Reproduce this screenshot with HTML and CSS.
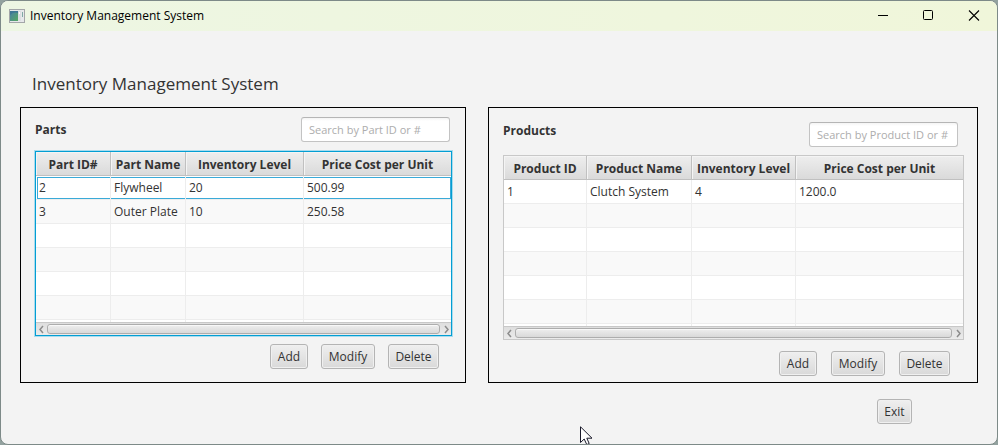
FILE: index.html
```html
<!DOCTYPE html>
<html lang="en">
<head>
<meta charset="utf-8">
<title>Inventory Management System</title>
<link rel="stylesheet" href="styles.css">
</head>
<body>
<div class="window">
  <header class="titlebar">
    <svg class="app-icon" width="16" height="14" viewBox="0 0 16 14" aria-hidden="true">
      <defs><linearGradient id="pane" x1="0" y1="0" x2="1" y2="1"><stop offset="0" stop-color="#4a7fa8"/><stop offset="1" stop-color="#55a860"/></linearGradient></defs>
      <rect x=".5" y=".5" width="15" height="13" fill="#e6e8ea" stroke="#a3a6a8"/>
      <rect x="1" y="2" width="8" height="10" fill="url(#pane)"/>
      <path d="M1 6C4 3 7 3 9 4V2H1Z" fill="#3f7795"/>
      <rect x="9" y="2" width="3" height="10" fill="#dcdfe2"/>
      <rect x="10" y="3" width="1" height="2" fill="#fff"/>
      <rect x="13" y="3" width="1" height="5" fill="#7fa9a4"/>
    </svg>
    <span class="caption">Inventory Management System</span>
    <button class="win-btn" type="button" aria-label="Minimize"><svg width="12" height="12" viewBox="0 0 12 12"><path d="M2 5.5H12" stroke="#000" fill="none"/></svg></button>
    <button class="win-btn" type="button" aria-label="Maximize"><svg width="12" height="12" viewBox="0 0 12 12"><rect x="1.5" y=".5" width="9" height="9" rx="1" stroke="#000" fill="none"/></svg></button>
    <button class="win-btn" type="button" aria-label="Close"><svg width="12" height="12" viewBox="0 0 12 12"><path d="M1 .5L11 10.5M11 .5L1 10.5" stroke="#000" stroke-width="1.1" fill="none"/></svg></button>
  </header>

  <main class="content">
    <h1>Inventory Management System</h1>
    <div class="panels">
      <section class="panel">
        <div class="panel-head">
          <label for="part-search">Parts</label>
          <input id="part-search" type="text" placeholder="Search by Part ID or #">
        </div>
        <div class="table-view focused">
          <table>
            <colgroup><col class="w75"><col class="w75"><col class="w118"><col></colgroup>
            <thead><tr><th>Part ID#</th><th>Part Name</th><th>Inventory Level</th><th>Price Cost per Unit</th></tr></thead>
            <tbody>
              <tr class="current"><td>2</td><td>Flywheel</td><td>20</td><td>500.99</td></tr>
              <tr><td>3</td><td>Outer Plate</td><td>10</td><td>250.58</td></tr>
              <tr><td></td><td></td><td></td><td></td></tr>
              <tr><td></td><td></td><td></td><td></td></tr>
              <tr><td></td><td></td><td></td><td></td></tr>
              <tr><td></td><td></td><td></td><td></td></tr>
              <tr class="partial"><td></td><td></td><td></td><td></td></tr>
            </tbody>
          </table>
          <div class="scrollbar">
            <button type="button" aria-label="Scroll left"><svg width="6" height="9" viewBox="0 0 6 9"><path d="M4 1L1 4.5L4 8" fill="none" stroke="#8c8c8c" stroke-width="1.5"/></svg></button>
            <div class="thumb"></div>
            <button type="button" aria-label="Scroll right"><svg width="6" height="9" viewBox="0 0 6 9"><path d="M2 1L5 4.5L2 8" fill="none" stroke="#8c8c8c" stroke-width="1.5"/></svg></button>
          </div>
        </div>
        <div class="actions">
          <button class="btn add" type="button">Add</button>
          <button class="btn modify" type="button">Modify</button>
          <button class="btn delete" type="button">Delete</button>
        </div>
      </section>

      <section class="panel products">
        <div class="panel-head">
          <label for="product-search">Products</label>
          <input id="product-search" type="text" placeholder="Search by Product ID or #">
        </div>
        <div class="table-view">
          <table>
            <colgroup><col class="w83"><col class="w105"><col class="w104"><col></colgroup>
            <thead><tr><th>Product ID</th><th>Product Name</th><th>Inventory Level</th><th>Price Cost per Unit</th></tr></thead>
            <tbody>
              <tr><td>1</td><td>Clutch System</td><td>4</td><td>1200.0</td></tr>
              <tr><td></td><td></td><td></td><td></td></tr>
              <tr><td></td><td></td><td></td><td></td></tr>
              <tr><td></td><td></td><td></td><td></td></tr>
              <tr><td></td><td></td><td></td><td></td></tr>
              <tr><td></td><td></td><td></td><td></td></tr>
              <tr class="partial"><td></td><td></td><td></td><td></td></tr>
            </tbody>
          </table>
          <div class="scrollbar">
            <button type="button" aria-label="Scroll left"><svg width="6" height="9" viewBox="0 0 6 9"><path d="M4 1L1 4.5L4 8" fill="none" stroke="#8c8c8c" stroke-width="1.5"/></svg></button>
            <div class="thumb"></div>
            <button type="button" aria-label="Scroll right"><svg width="6" height="9" viewBox="0 0 6 9"><path d="M2 1L5 4.5L2 8" fill="none" stroke="#8c8c8c" stroke-width="1.5"/></svg></button>
          </div>
        </div>
        <div class="actions">
          <button class="btn add" type="button">Add</button>
          <button class="btn modify" type="button">Modify</button>
          <button class="btn delete" type="button">Delete</button>
        </div>
      </section>
    </div>
    <div class="footer"><button class="btn exit" type="button">Exit</button></div>
  </main>
  <svg class="cursor" width="13" height="19" viewBox="0 0 13 19" aria-hidden="true"><path d="M.5 .8V16.5L4.2 13L6.8 18.6L9.2 17.5L6.8 12.2H12Z" fill="#fff" stroke="#1a1a2a"/></svg>
</div>
</body>
</html>
```
FILE: styles.css
```css
* { box-sizing: border-box; }

body {
  margin: 0;
  background: #93a29f;
  color: #333;
  font: 12px/16px "Open Sans", "Noto Sans", sans-serif;
}

button, input { font: inherit; color: inherit; }

.window {
  position: relative;
  min-height: 100vh;
  border: 1px solid #7d8a88;
  border-radius: 8px;
  background: #f3f3f3;
  overflow: hidden;
}

.titlebar {
  display: flex;
  align-items: center;
  height: 30px;
  padding-left: 8px;
  background: linear-gradient(90deg, #edf6e3, #f0f6da);
  color: #000;
}

.app-icon { margin-right: 5px; }
.caption { flex: 1; }

.win-btn {
  display: flex;
  align-items: center;
  justify-content: center;
  width: 46px;
  height: 30px;
  padding: 0;
  border: 0;
  background: none;
}

.content { padding: 40px 19px 20px; }

h1 {
  margin: 0 0 10px;
  padding-left: 12px;
  font-size: 17px;
  font-weight: 400;
  line-height: 26px;
}

.panels {
  display: grid;
  grid-template-columns: 446fr 490fr;
  gap: 22px;
}

.panel {
  height: 276px;
  padding: 9px 13px 0 14px;
  border: 1px solid #000;
}

.products { padding-top: 14px; }

.panel-head {
  display: flex;
  justify-content: space-between;
  height: 34px;
  padding-right: 2px;
}

.products .panel-head { height: 33px; padding-right: 6px; }

.panel-head label { padding-top: 5px; font-weight: 700; }
.products label { padding-top: 1px; }

.panel-head input {
  width: 149px;
  height: 25px;
  padding: 0 7px;
  border: 1px solid #c3c3c3;
  border-top-color: #b5b5b5;
  border-radius: 3px;
  background: linear-gradient(#f4f4f4, #fff 3px);
  font-size: 11px;
  outline: none;
}

.panel-head input::placeholder { color: #adadad; opacity: 1; }

.table-view { border: 1px solid #c8c8c8; background: #fff; }
.focused { border-color: #039ed3; box-shadow: 0 0 0 1px #a9dcee; }

table {
  width: 100%;
  table-layout: fixed;
  border-collapse: separate;
  border-spacing: 0;
}

.w75 { width: 75px; }
.w83 { width: 83px; }
.w104 { width: 104px; }
.w105 { width: 105px; }
.w118 { width: 118px; }

th {
  height: 24px;
  padding: 2px 0 0;
  border-right: 1px solid #c0c0c0;
  border-bottom: 1px solid #c0c0c0;
  background: linear-gradient(#eee, #dadada);
  box-shadow: inset 1px 1px 0 #f4f4f4;
  font-weight: 700;
  white-space: nowrap;
}

td {
  height: 24px;
  padding: 0 3px;
  border-right: 1px solid #ededed;
  border-bottom: 1px solid #ededed;
  white-space: nowrap;
}

th:last-child, td:last-child { border-right: 0; }
tbody tr:nth-child(even) { background: #f9f9f9; }
.partial td { height: 2px; padding: 0; border-bottom: 0; }

/* Focus outline of the current row, broken at the column lines. */
.current td {
  background:
    linear-gradient(#3aaad8, #3aaad8) 0 1px / 100% 1px no-repeat,
    linear-gradient(#3aaad8, #3aaad8) 0 22px / 100% 1px no-repeat;
}
.current td:first-child {
  background:
    linear-gradient(#3aaad8, #3aaad8) 1px 1px / 100% 1px no-repeat,
    linear-gradient(#3aaad8, #3aaad8) 1px 22px / 100% 1px no-repeat,
    linear-gradient(#3aaad8, #3aaad8) 1px 1px / 1px 22px no-repeat;
}
.current td:last-child {
  background:
    linear-gradient(#3aaad8, #3aaad8) 0 1px / 100% 1px no-repeat,
    linear-gradient(#3aaad8, #3aaad8) 0 22px / 100% 1px no-repeat,
    linear-gradient(#3aaad8, #3aaad8) 100% 1px / 1px 22px no-repeat;
}

.scrollbar {
  display: flex;
  align-items: center;
  height: 13px;
  border-top: 1px solid #c8c8c8;
  background: linear-gradient(#dedede, #ebebeb);
}

.scrollbar button {
  display: flex;
  justify-content: center;
  width: 11px;
  padding: 0;
  border: 0;
  background: none;
}

.thumb {
  flex: 1;
  height: 10px;
  border: 1px solid #adadad;
  border-radius: 3px;
  background: linear-gradient(#eee, #d9d9d9);
  box-shadow: inset 0 1px 0 #f8f8f8;
}

.actions {
  display: flex;
  justify-content: flex-end;
  gap: 13px;
  padding: 8px 13px 0 0;
}

.products .actions { gap: 14px; padding: 11px 14px 0 0; }

.btn {
  height: 25px;
  padding: 0;
  border: 1px solid #b4b4b4;
  border-radius: 3px;
  background: linear-gradient(#efefef, #d9d9d9);
  box-shadow: inset 0 0 0 1px #f0f0f0;
}

.add { width: 38px; }
.modify { width: 54px; }
.delete { width: 51px; }
.exit { width: 35px; }

.footer {
  display: flex;
  justify-content: flex-end;
  padding: 16px 66px 0 0;
}

.cursor { position: absolute; left: 579px; top: 425px; }
```
